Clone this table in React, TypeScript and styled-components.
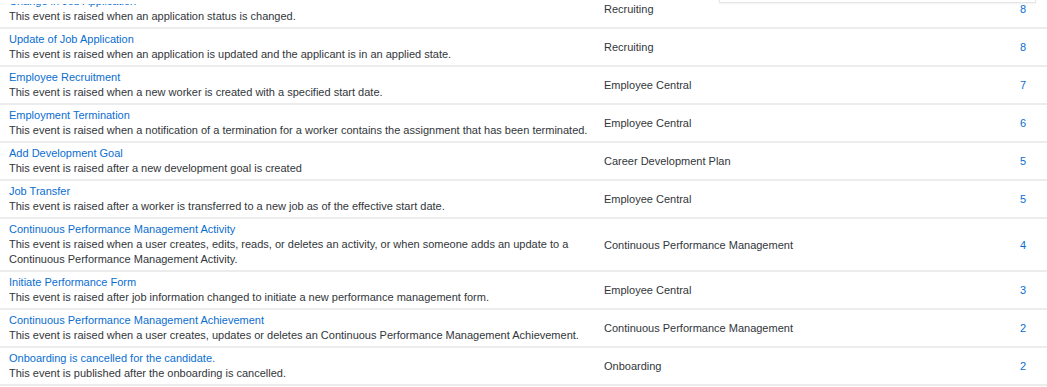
import styled, { createGlobalStyle } from "styled-components";

const GlobalStyle = createGlobalStyle`
  body {
    margin: 0;
    background: #ffffff;
    font-family: "Liberation Sans", Arial, sans-serif;
    overflow: hidden;
  }
`;

type EventRow = {
  name: string;
  description: string;
  area: string;
  count: number;
};

const rows: EventRow[] = [
  {
    name: "Change in Job Application",
    description: "This event is raised when an application status is changed.",
    area: "Recruiting",
    count: 8,
  },
  {
    name: "Update of Job Application",
    description:
      "This event is raised when an application is updated and the applicant is in an applied state.",
    area: "Recruiting",
    count: 8,
  },
  {
    name: "Employee Recruitment",
    description:
      "This event is raised when a new worker is created with a specified start date.",
    area: "Employee Central",
    count: 7,
  },
  {
    name: "Employment Termination",
    description:
      "This event is raised when a notification of a termination for a worker contains the assignment that has been terminated.",
    area: "Employee Central",
    count: 6,
  },
  {
    name: "Add Development Goal",
    description: "This event is raised after a new development goal is created",
    area: "Career Development Plan",
    count: 5,
  },
  {
    name: "Job Transfer",
    description:
      "This event is raised after a worker is transferred to a new job as of the effective start date.",
    area: "Employee Central",
    count: 5,
  },
  {
    name: "Continuous Performance Management Activity",
    description:
      "This event is raised when a user creates, edits, reads, or deletes an activity, or when someone adds an update to a Continuous Performance Management Activity.",
    area: "Continuous Performance Management",
    count: 4,
  },
  {
    name: "Initiate Performance Form",
    description:
      "This event is raised after job information changed to initiate a new performance management form.",
    area: "Employee Central",
    count: 3,
  },
  {
    name: "Continuous Performance Management Achievement",
    description:
      "This event is raised when a user creates, updates or deletes an Continuous Performance Management Achievement.",
    area: "Continuous Performance Management",
    count: 2,
  },
  {
    name: "Onboarding is cancelled for the candidate.",
    description: "This event is published after the onboarding is cancelled.",
    area: "Onboarding",
    count: 2,
  },
];

const Page = styled.div`
  position: relative;
  width: 1047px;
  height: 387px;
  overflow: hidden;
`;

// list is scrolled a little, so the first row is cut at the top
const Table = styled.div`
  margin-top: -9px;
`;

// bottom edge of the fixed header the list scrolls under
const HeaderEdge = styled.div`
  position: absolute;
  top: 0;
  left: 0;
  right: 0;
  height: 4px;
  background: #ffffff;
`;

const Row = styled.div`
  display: grid;
  grid-template-columns: 595px 1fr 60px;
  align-items: center;
  border-bottom: 2px solid #ececec;
  padding: 3px 21px 3px 9px;
`;

const EventCell = styled.div`
  display: flex;
  flex-direction: column;
  font-size: 11px;
  line-height: 15px;
`;

const EventName = styled.a`
  color: #0a6ed1;
  text-decoration: none;
  cursor: pointer;
`;

const EventDescription = styled.span`
  color: #32363a;
`;

const AreaCell = styled.div`
  font-size: 11px;
  color: #32363a;
`;

const CountCell = styled.a`
  font-size: 11px;
  color: #0a6ed1;
  text-align: right;
  text-decoration: none;
`;

const Popover = styled.div`
  position: absolute;
  top: -40px;
  left: 719px;
  width: 315px;
  height: 41px;
  background: #ffffff;
  border: 1px solid #e6e6e6;
  box-shadow: 0 1px 2px rgba(0, 0, 0, 0.06);
`;

const App = () => {
  return (
    <Page>
      <GlobalStyle />
      <Table>
        {rows.map((row) => (
          <Row key={row.name}>
            <EventCell>
              <EventName>{row.name}</EventName>
              <EventDescription>{row.description}</EventDescription>
            </EventCell>
            <AreaCell>{row.area}</AreaCell>
            <CountCell>{row.count}</CountCell>
          </Row>
        ))}
      </Table>
      <HeaderEdge />
      <Popover />
    </Page>
  );
};

export default App;
